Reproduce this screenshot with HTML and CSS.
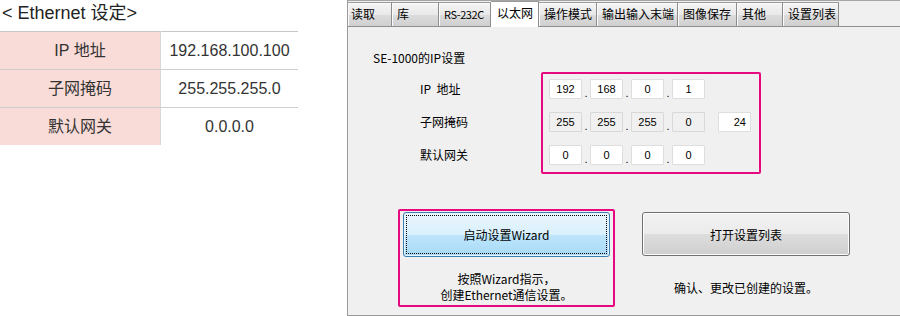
FILE: index.html
```html
<!DOCTYPE html>
<html lang="zh">
<head>
    <meta charset="UTF-8">
    <title>Ethernet 设定</title>
    <link rel="stylesheet" href="styles.css">
</head>
<body>
<div class="page">
    <!-- 左侧：设定值一览 -->
    <section class="spec">
        <h1 class="spec-title">&lt; Ethernet 设定&gt;</h1>
        <table class="spec-table">
            <tr><th>IP 地址</th><td>192.168.100.100</td></tr>
            <tr><th>子网掩码</th><td>255.255.255.0</td></tr>
            <tr><th>默认网关</th><td>0.0.0.0</td></tr>
        </table>
    </section>

    <!-- 右侧：设置对话框 -->
    <section class="dialog">
        <div class="tabs">
            <div class="tab tab-read">读取</div>
            <div class="tab tab-lib">库</div>
            <div class="tab tab-rs">RS-232C</div>
            <div class="tab tab-eth active">以太网</div>
            <div class="tab tab-mode">操作模式</div>
            <div class="tab tab-io">输出输入末端</div>
            <div class="tab tab-img">图像保存</div>
            <div class="tab tab-other">其他</div>
            <div class="tab tab-list">设置列表</div>
        </div>

        <div class="panel">
            <p class="panel-title">SE-1000的IP设置</p>

            <div class="ip-block">
                <div class="ip-labels">
                    <div class="ip-label">IP&nbsp;&nbsp;地址</div>
                    <div class="ip-label">子网掩码</div>
                    <div class="ip-label">默认网关</div>
                </div>
                <div class="ip-frame">
                    <div class="ip-row">
                        <span class="octet">192</span><span class="dot">.</span>
                        <span class="octet">168</span><span class="dot">.</span>
                        <span class="octet">0</span><span class="dot">.</span>
                        <span class="octet">1</span>
                    </div>
                    <div class="ip-row">
                        <span class="octet disabled">255</span><span class="dot">.</span>
                        <span class="octet disabled">255</span><span class="dot">.</span>
                        <span class="octet disabled">255</span><span class="dot">.</span>
                        <span class="octet disabled">0</span>
                        <span class="octet prefix">24</span>
                    </div>
                    <div class="ip-row">
                        <span class="octet">0</span><span class="dot">.</span>
                        <span class="octet">0</span><span class="dot">.</span>
                        <span class="octet">0</span><span class="dot">.</span>
                        <span class="octet">0</span>
                    </div>
                </div>
            </div>

            <div class="actions">
                <div class="action action-wizard">
                    <button class="btn btn-primary" type="button"><span class="focus">启动设置Wizard</span></button>
                    <p class="action-note note-two">按照Wizard指示，<br>创建Ethernet通信设置。</p>
                </div>
                <div class="action action-list">
                    <button class="btn" type="button">打开设置列表</button>
                    <p class="action-note note-one">确认、更改已创建的设置。</p>
                </div>
            </div>
        </div>
    </section>
</div>
</body>
</html>
```

FILE: styles.css
```css
body {
    margin: 0;
    width: 900px;
    height: 316px;
    overflow: hidden;
    background-color: #fff;
    font-family: "Liberation Sans", "Noto Sans CJK SC", sans-serif;
}
.page {
    display: flex;
    height: 316px;
}

/* 左侧设定表 */
.spec {
    width: 347px;
    flex-shrink: 0;
}
.spec-title {
    box-sizing: border-box;
    height: 31px;
    margin: 0;
    padding: 1px 0 0 2px;
    font-size: 18px;
    font-weight: normal;
    line-height: 24px;
    color: #222;
}
.spec-table {
    width: 298px;
    border-collapse: collapse;
    border-top: 1px solid #c8c8c8;
    font-size: 16px;
    color: #333;
}
.spec-table th,
.spec-table td {
    height: 37px;
    padding: 0;
    text-align: center;
    font-weight: normal;
    border-bottom: 1px solid #cfcfcf;
    line-height: 20px;
}
.spec-table th {
    width: 160px;
    background-color: #f9dcd7;
    border-right: 1px solid #d8d8d8;
}
.spec-table tr:last-child th,
.spec-table tr:last-child td {
    border-bottom: none;
}

/* 右侧对话框 */
.dialog {
    flex: 1;
    display: flex;
    flex-direction: column;
    border-left: 1px solid #9a9a9a;
    font-family: "Noto Sans CJK SC", sans-serif;
    font-size: 12px;
    color: #000;
}
.tabs {
    box-sizing: border-box;
    height: 27px;
    display: flex;
    align-items: flex-start;
    border-top: 1px solid #a5a5a5;
    border-bottom: 1px solid #8f8f8f;
    background-color: #f0f0f0;
}
.tab {
    box-sizing: border-box;
    height: 24px;
    margin-top: 1px;
    padding-left: 5px;
    line-height: 22px;
    white-space: nowrap;
    overflow: hidden;
    border-top: 1px solid #9a9a9a;
    border-right: 1px solid #8d8d8d;
    box-shadow: inset 1px 1px 0 #fbfbfb;
    background: linear-gradient(#f4f4f4, #e9e9e9 50%, #dcdcdc 51%, #d0d0d0);
}
.tab.active {
    height: 26px;
    margin-top: 0;
    padding-left: 6px;
    line-height: 22px;
    background: #fff;
    box-shadow: none;
    border-top: 1px solid #9a9a9a;
}
.tab-read { width: 44px; padding-left: 3px; }
.tab-lib { width: 47px; }
.tab-rs {
    width: 52px;
    font-size: 11px;
    letter-spacing: -0.4px;
}
.tab-eth { width: 48px; }
.tab-mode { width: 58px; }
.tab-io { width: 81px; }
.tab-img { width: 59px; }
.tab-other { width: 46px; }
.tab-list { width: 56px; }

.panel {
    flex: 1;
    box-sizing: border-box;
    background-color: #f0f0f0;
    border-bottom: 1px solid #9a9a9a;
}
.panel-title {
    margin: 0;
    padding: 24px 0 0 25px;
    line-height: 14px;
}

/* IP 输入区 */
.ip-block {
    display: flex;
    align-items: flex-start;
    margin: 7px 0 0 72px;
}
.ip-labels {
    width: 121px;
    padding-top: 7px;
    display: flex;
    flex-direction: column;
    gap: 13px;
}
.ip-label {
    height: 20px;
    line-height: 20px;
}
.ip-frame {
    box-sizing: border-box;
    width: 220px;
    height: 102px;
    padding: 5px 0 0 6px;
    border: 2px solid #e5087e;
    border-radius: 2px;
    display: flex;
    flex-direction: column;
    gap: 13px;
}
.ip-row {
    display: flex;
    align-items: flex-end;
    height: 20px;
}
.octet {
    box-sizing: border-box;
    width: 33px;
    height: 20px;
    line-height: 18px;
    text-align: center;
    font-family: "Liberation Sans", sans-serif;
    font-size: 11px;
    background-color: #fff;
    border: 1px solid #dedede;
    border-radius: 1px;
}
.octet.disabled {
    background-color: #f0f0f0;
    border-color: #d8d8d8;
}
.octet.prefix {
    margin-left: 13px;
    padding-right: 4px;
    text-align: right;
}
.dot {
    width: 8px;
    line-height: 12px;
    text-align: center;
    font-family: "Liberation Sans", sans-serif;
    font-size: 11px;
}

/* 按钮区 */
.actions {
    display: flex;
    align-items: flex-start;
    gap: 25px;
    margin: 35px 0 0 50px;
}
.action {
    box-sizing: border-box;
    display: flex;
    flex-direction: column;
    align-items: center;
    padding: 1px 2px 0;
    border: 2px solid transparent;
}
.action-wizard {
    width: 217px;
    height: 98px;
    border-color: #e5087e;
    border-radius: 2px;
}
.action-list {
    width: 212px;
}
.btn {
    box-sizing: border-box;
    width: 207px;
    height: 45px;
    padding: 0;
    font-family: inherit;
    font-size: 12px;
    color: #000;
    border: 1px solid #707070;
    border-radius: 3px;
    background: linear-gradient(#f2f2f2, #ebebeb 50%, #dddddd 51%, #cfcfcf);
    box-shadow: inset 0 0 0 1px #fcfcfc;
}
.action-list .btn {
    width: 208px;
    height: 44px;
}
.btn-primary {
    padding: 2px;
    border-color: #3c7fb1;
    background: linear-gradient(#eaf6fd, #d9f0fc 50%, #bee6fd 51%, #a7d9f5);
    box-shadow: inset 0 0 0 1px #e6f4fb;
}
.btn-primary .focus {
    display: flex;
    align-items: center;
    justify-content: center;
    height: 100%;
    border: 1px dotted #000;
    box-sizing: border-box;
}
.action-note {
    margin: 0;
    text-align: center;
    line-height: 16px;
    white-space: nowrap;
}
.note-two {
    margin-top: 14px;
}
.note-one {
    margin-top: 24px;
}
```
